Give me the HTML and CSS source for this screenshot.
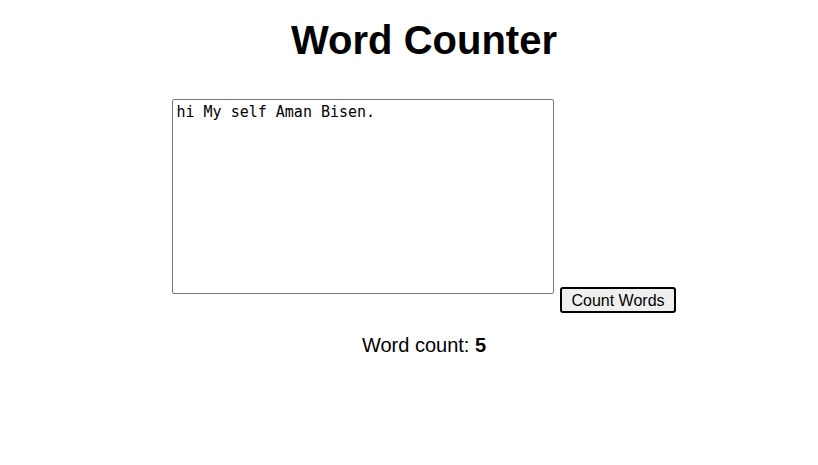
FILE: index.html
```html
<!DOCTYPE html>
<html>
<head>
<meta charset="utf-8">
<title>Word Counter</title>
<link rel="stylesheet" href="styles.css">
</head>
<body>
<main class="page">
  <h1 class="title">Word Counter</h1>
  <div class="editor">
    <textarea class="input" spellcheck="false">hi My self Aman Bisen.</textarea>
    <button class="count-btn" type="button">Count Words</button>
  </div>
  <p class="result">Word count: <strong>5</strong></p>
</main>
</body>
</html>
```
FILE: styles.css
```css
html, body {
  margin: 0;
  padding: 0;
  background: #ffffff;
}
.page {
  margin-left: 30px;
  font-family: "Liberation Sans", Arial, sans-serif;
  color: #000;
  text-align: center;
}
.title {
  margin: 17px 0 0;
  font-size: 40px;
  font-weight: bold;
  line-height: 46px;
}
.editor {
  margin-top: 36px;
  display: flex;
  justify-content: center;
  align-items: flex-end;
  gap: 6px;
}
.input {
  box-sizing: border-box;
  width: 382px;
  height: 195px;
  margin: 0 0 19px;
  padding: 3px 3px 2px;
  border: 1px solid #767676;
  border-radius: 2px;
  font-family: "DejaVu Sans Mono", "Liberation Mono", monospace;
  font-size: 15px;
  line-height: 19px;
  color: #000;
  resize: none;
  text-align: left;
}
.count-btn {
  box-sizing: border-box;
  height: 26px;
  padding: 3px 9px 1px;
  margin: 0;
  border: 2px solid #000;
  border-radius: 3px;
  background: #efefef;
  font-family: "Liberation Sans", Arial, sans-serif;
  font-size: 16px;
  line-height: 18px;
  color: #000;
}
.result {
  margin: 21px 0 0;
  font-size: 20px;
  line-height: 23px;
}
```
